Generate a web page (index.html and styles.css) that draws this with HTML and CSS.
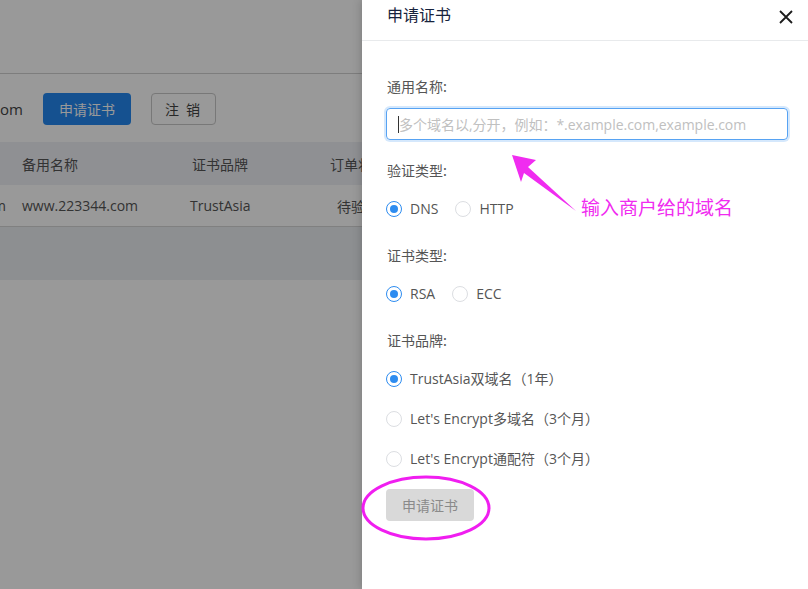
FILE: index.html
```html
<!DOCTYPE html>
<html lang="zh-CN">
<head>
<meta charset="utf-8">
<title>申请证书</title>
<link rel="stylesheet" href="styles.css">
</head>
<body>
<div class="page">
  <div class="bg">
    <div class="bg-top"></div>
    <div class="toolbar">
      <span class="domain">om</span>
      <button class="btn-primary">申请证书</button>
      <button class="btn-default">注 销</button>
    </div>
    <div class="table">
      <div class="tr th">
        <div class="c1"></div>
        <div class="c2">备用名称</div>
        <div class="c3">证书品牌</div>
        <div class="c4">订单状态</div>
      </div>
      <div class="tr td">
        <div class="c1"><span class="clip">www.223344.com</span></div>
        <div class="c2">www.223344.com</div>
        <div class="c3 c3b">TrustAsia</div>
        <div class="c4 c4b">待验证</div>
      </div>
      <div class="tfoot"></div>
    </div>
  </div>

  <div class="mask"></div>

  <aside class="drawer">
    <div class="drawer-head">
      <span class="drawer-title">申请证书</span>
      <svg class="close" width="16" height="16" viewBox="0 0 16 16"><path d="M2 2 L14 14 M14 2 L2 14" stroke="#1c1c1c" stroke-width="1.8" fill="none"/></svg>
    </div>
    <div class="drawer-body">
      <div class="label">通用名称:</div>
      <div class="input"><span class="caret"></span><span class="ph">多个域名以,分开，例如：*.example.com,example.com</span></div>

      <div class="label gap">验证类型:</div>
      <div class="radios">
        <span class="radio on"></span><span class="rtext">DNS</span>
        <span class="radio"></span><span class="rtext">HTTP</span>
      </div>

      <div class="label gap2">证书类型:</div>
      <div class="radios">
        <span class="radio on"></span><span class="rtext">RSA</span>
        <span class="radio"></span><span class="rtext">ECC</span>
      </div>

      <div class="label gap2">证书品牌:</div>
      <div class="vradios">
        <div class="vrow"><span class="radio on"></span><span class="rtext">TrustAsia双域名（1年）</span></div>
        <div class="vrow"><span class="radio"></span><span class="rtext">Let's Encrypt多域名（3个月）</span></div>
        <div class="vrow"><span class="radio"></span><span class="rtext">Let's Encrypt通配符（3个月）</span></div>
      </div>

      <button class="btn-disabled">申请证书</button>
    </div>
  </aside>

  <svg class="annot" width="808" height="589" viewBox="0 0 808 589">
    <polygon points="512,155 536,160 528,167 576,211 524,173 521,182" fill="#f02cf0"/>
    <ellipse cx="426" cy="508" rx="63" ry="31" fill="none" stroke="#f01ef0" stroke-width="3"/>
  </svg>
  <span class="annot-text">输入商户给的域名</span>
</div>
</body>
</html>
```
FILE: styles.css
```css
* { box-sizing: border-box; }
html, body { margin: 0; padding: 0; }
body {
  width: 808px;
  height: 589px;
  overflow: hidden;
  font-family: "Open Sans", "Noto Sans CJK SC", sans-serif;
  font-size: 14px;
  color: #515a6e;
  background: #fff;
}
.page { position: relative; width: 808px; height: 589px; overflow: hidden; }

.bg { width: 808px; }
.bg-top { height: 74px; border-bottom: 1px solid #d0d0d0; }
.toolbar {
  height: 68px;
  display: flex;
  align-items: center;
  padding-top: 2px;
}
.domain { width: 43px; color: #444; font-size: 15px; }
.btn-primary {
  width: 88px; height: 32px;
  border: 0; border-radius: 4px;
  background: #2488f0; color: #fff;
  font: 14px "Noto Sans CJK SC", sans-serif;
  margin-right: 20px;
}
.btn-default {
  width: 65px; height: 32px;
  border: 1px solid #c8c8c8; border-radius: 4px;
  background: #fff; color: #444;
  font: 14px "Noto Sans CJK SC", sans-serif;
  letter-spacing: 2px;
}

.table { width: 808px; }
.tr { display: flex; align-items: center; }
.th { height: 43px; background: #eff0f5; color: #555; }
.td { height: 42px; border-bottom: 1px solid #d6d6d6; color: #555; }
.c1 { width: 22px; padding-right: 16px; overflow: hidden; display: flex; justify-content: flex-end; white-space: nowrap; }
.clip { flex: none; }
.c2 { width: 170px; }
.c3 { width: 138px; }
.c3b { margin-left: -2px; margin-right: 2px; }
.c4 { width: 200px; white-space: nowrap; }
.c4b { padding-left: 7px; }
.tfoot { height: 53px; background: #eceef2; }

.mask {
  position: absolute; left: 0; top: 0; right: 0; bottom: 0;
  background: rgba(0,0,0,0.4);
}

.drawer {
  position: absolute; top: 0; right: 0;
  width: 446px; height: 589px;
  background: #fff;
  box-shadow: -2px 0 8px rgba(0,0,0,0.15);
}
.drawer-head {
  height: 41px;
  border-bottom: 1px solid #e8eaec;
  display: flex;
  justify-content: space-between;
  align-items: flex-start;
  padding: 3px 14px 0 25px;
}
.drawer-title { font-size: 16px; line-height: 22px; color: #17233d; font-family: "Noto Sans CJK SC", sans-serif; }
.close { margin-top: 6px; }

.drawer-body { padding: 35px 20px 0 24px; }
.label { line-height: 20px; height: 20px; margin-left: 1px; color: #555; font-family: "Noto Sans CJK SC", sans-serif; }
.label.gap { margin-top: 20px; }
.label.gap2 { margin-top: 26px; }

.input {
  margin-top: 12px;
  width: 402px; height: 32px;
  border: 1px solid #57a3f3;
  border-radius: 4px;
  box-shadow: 0 0 0 2px rgba(45,140,240,0.2);
  display: flex; align-items: center;
  padding-left: 11px;
}
.caret { width: 1px; height: 17px; background: #333; }
.ph { color: #c0c0c0; font-size: 14px; letter-spacing: -0.02px; white-space: nowrap; }

.radios { display: flex; align-items: center; height: 20px; margin-top: 19px; }
.radio {
  width: 16px; height: 16px;
  border: 1px solid #dcdee2; border-radius: 50%;
  background: #fff;
  display: inline-flex; align-items: center; justify-content: center;
  flex: none;
}
.radio.on { border-color: #2d8cf0; }
.radio.on::after {
  content: ""; width: 8px; height: 8px; border-radius: 50%; background: #2d8cf0;
}
.rtext { margin-left: 8px; margin-right: 17px; color: #555; line-height: 20px; }
.vradios { margin-top: 19px; display: flex; flex-direction: column; gap: 20px; }
.vrow { display: flex; align-items: center; height: 20px; }

.btn-disabled {
  margin-top: 20px;
  width: 88px; height: 32px;
  border: 0; border-radius: 4px;
  background: #d9d9d9; color: #8a8a8a;
  font: 14px "Noto Sans CJK SC", sans-serif;
}

.annot { position: absolute; left: 0; top: 0; pointer-events: none; }
.annot-text {
  position: absolute; left: 581px; top: 194px;
  font-size: 19px; line-height: 26px;
  color: #f02cf0;
  font-family: "Noto Sans CJK SC", sans-serif;
}
```
